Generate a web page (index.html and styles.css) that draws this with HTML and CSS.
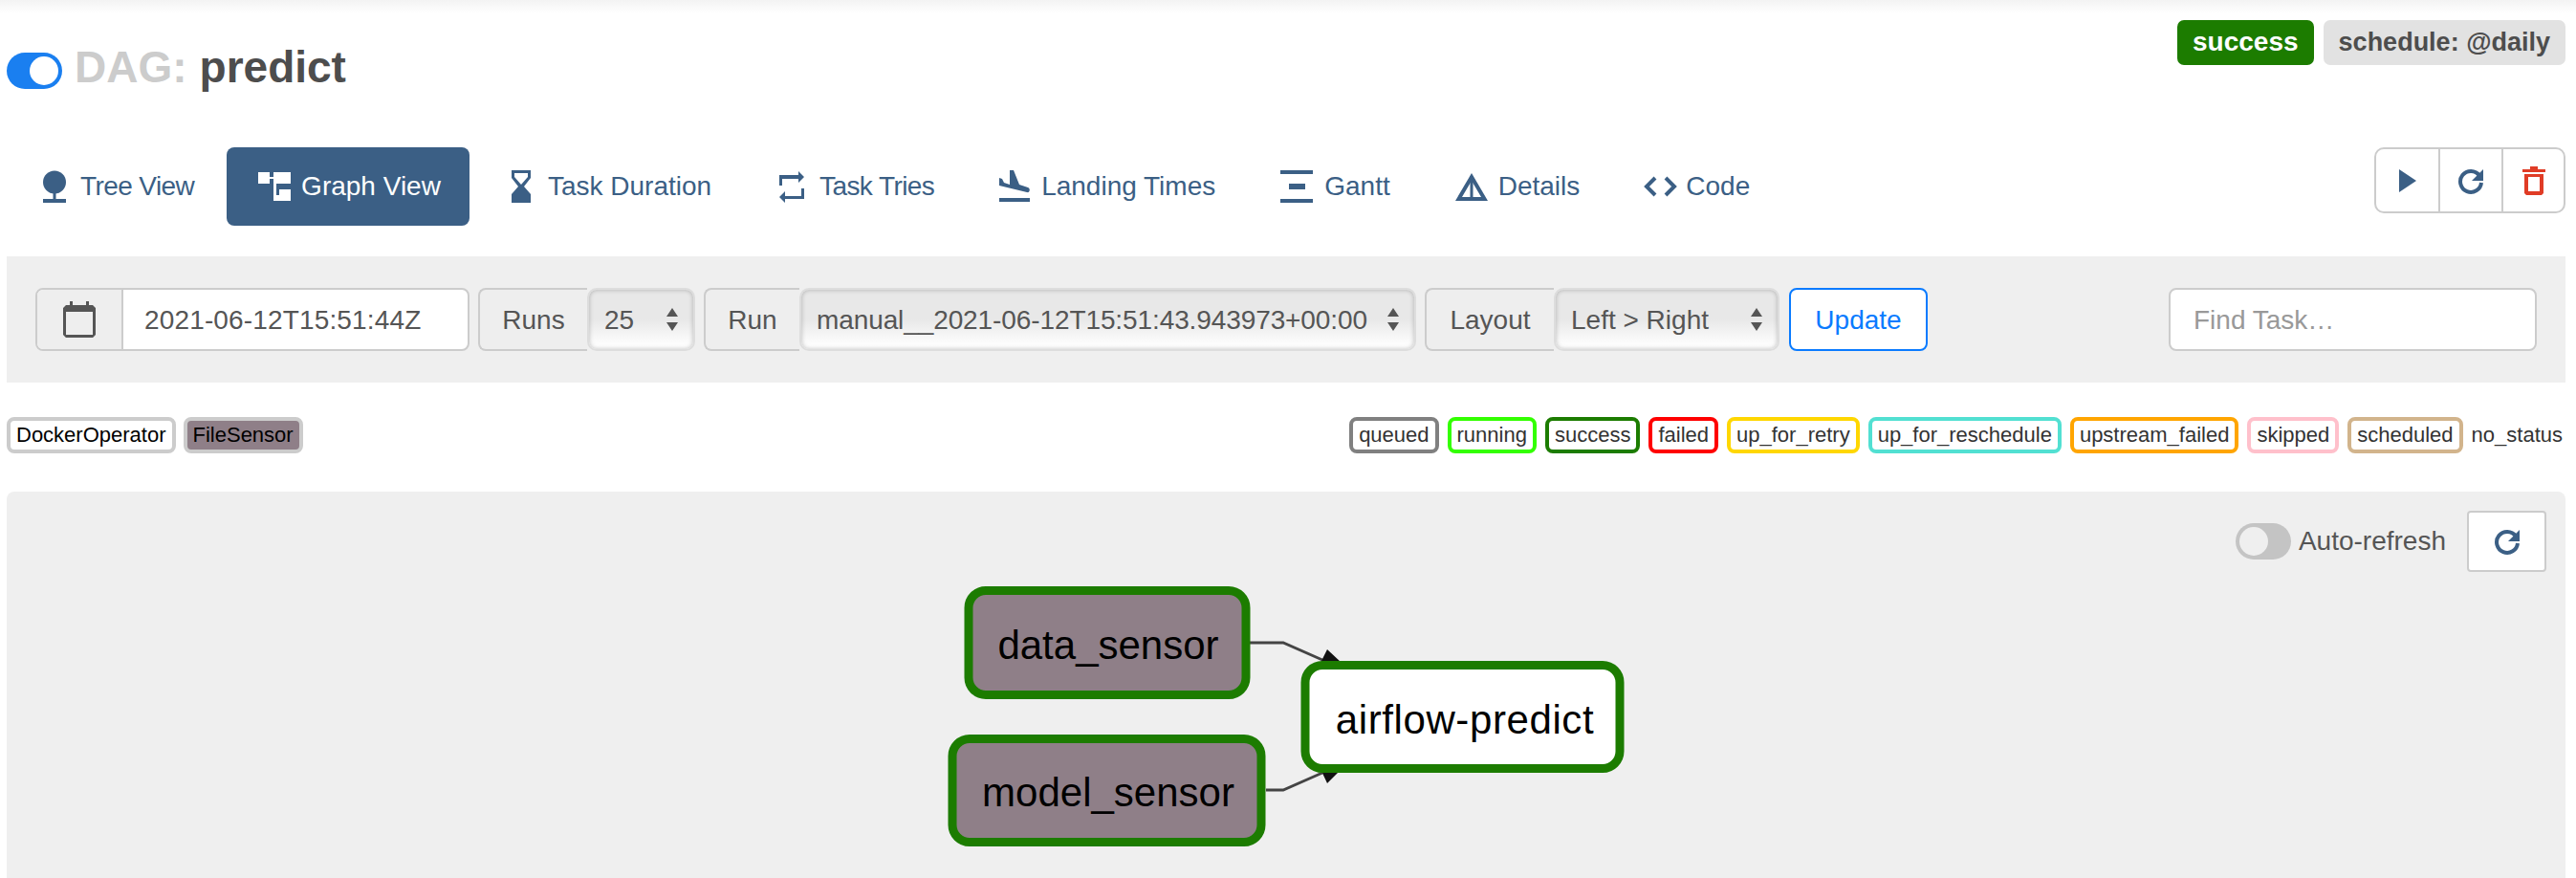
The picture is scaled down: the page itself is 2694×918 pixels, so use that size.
FILE: index.html
```html
<!DOCTYPE html>
<html lang="en">
<head>
  <meta charset="UTF-8" />
  <meta name="viewport" content="width=device-width, initial-scale=1.0" />
  <title>DAG: predict</title>
  <link rel="stylesheet" href="styles.css">
</head>
<body>
  <div class="top-shadow"></div>

  <div class="dag-head">
    <h2 class="dag-title">
      <span class="switch switch-on"><span class="knob"></span></span>
      <span class="dag-word">DAG:</span> <span>predict</span>
    </h2>
    <div class="badges">
      <span class="badge badge-success">success</span>
      <span class="badge badge-schedule">schedule: @daily</span>
    </div>
  </div>

  <div class="nav-row">
    <ul class="nav-pills">
      <li><a class="pill pill-tight">
        <svg width="39" height="34" viewBox="0 0 39 34"><circle cx="12" cy="12.500" r="12"/><rect x="10.500" y="22" width="3" height="9"/><rect y="30" width="24" height="4"/></svg>
        Tree View</a></li>
      <li><a class="pill active">
        <svg width="48" height="34" viewBox="0 0 48 34"><path d="M3 2h12v5h4V2h18v12H22v12h3v-6h12v12H19V9h-4v5H3z"/></svg>
        Graph View</a></li>
      <li><a class="pill">
        <svg width="48" height="34" viewBox="0 0 48 34"><path d="M10 0h20v8l-7 9 7 8v9H10v-9l7-8-7-9zM13 3v4l7 8 7-8V3z" fill-rule="evenodd"/></svg>
        Task Duration</a></li>
      <li><a class="pill pill-tight">
        <svg width="49" height="34" viewBox="0 0 49 34"><path d="M10 5h20V1l6 6-6 6V9H13v7h-3zM33 19h3v11H16v4l-6-6 6-6v5h17z" transform="translate(-3 0)"/></svg>
        Task Tries</a></li>
      <li><a class="pill">
        <svg width="48" height="34" viewBox="0 0 48 34"><path d="M15 0h4l6 15 9 3c3 1 2 6-1 5L4 16V8l3 1 2 4 6 2z"/><rect x="4" y="29" width="32" height="4"/></svg>
        Landing Times</a></li>
      <li><a class="pill">
        <svg width="50" height="34" viewBox="0 0 50 34"><rect x="4" width="34" height="4"/><rect x="13" y="14" width="17" height="6"/><rect x="4" y="30" width="34" height="4"/></svg>
        Gantt</a></li>
      <li><a class="pill">
        <svg width="49" height="34" viewBox="0 0 49 34"><path d="M21 7 7.500 30h27z" class="line"/><path d="M21 6v24" class="line thin"/></svg>
        Details</a></li>
      <li><a class="pill">
        <svg width="47" height="34" viewBox="0 0 47 34"><path d="M15 8 6 17l9 9M26 8l9 9-9 9" class="line"/></svg>
        Code</a></li>
    </ul>
    <div class="actions">
      <a class="action-btn">
        <svg width="18" height="24" viewBox="0 0 18 24"><path d="M0 0l18 12L0 24z" class="blue"/></svg>
      </a>
      <a class="action-btn">
        <svg width="28" height="28" viewBox="0 0 28 28"><path d="M23 8.500A11 11 0 1 0 25 16" class="refresh"/><path d="M27 2v12H15z" class="blue"/></svg>
      </a>
      <a class="action-btn">
        <svg width="24" height="30" viewBox="0 0 24 30"><path d="M0 3h8V0h8v3h8v3H0zM2 8h20v20l-2 2H4l-2-2zM6 11v15h12V11z" class="red" fill-rule="evenodd"/></svg>
      </a>
    </div>
  </div>

  <div class="form-bar">
    <div class="input-group date-group">
      <span class="addon">
        <svg width="34" height="38" viewBox="0 0 34 38"><path d="M7 0h3v4H24V0h3v4h4l3 3v28l-3 3H3l-3-3V7l3-3h4zM3 11v24h28V11z" fill-rule="evenodd"/></svg>
      </span>
      <span class="date-value">2021-06-12T15:51:44Z</span>
    </div>

    <div class="field">
      <span class="field-label runs-label">Runs</span>
      <div class="select runs-select">25<svg class="arrows" width="12" height="24" viewBox="0 0 12 24"><path d="M6 0l6 9H0zM6 24l-6-9h12z"/></svg></div>
    </div>
    <div class="field">
      <span class="field-label run-label">Run</span>
      <div class="select run-select">manual__2021-06-12T15:51:43.943973+00:00<svg class="arrows" width="12" height="24" viewBox="0 0 12 24"><path d="M6 0l6 9H0zM6 24l-6-9h12z"/></svg></div>
    </div>
    <div class="field">
      <span class="field-label layout-label">Layout</span>
      <div class="select layout-select">Left &gt; Right<svg class="arrows" width="12" height="24" viewBox="0 0 12 24"><path d="M6 0l6 9H0zM6 24l-6-9h12z"/></svg></div>
    </div>
    <button class="update-btn">Update</button>

    <div class="find-task">Find Task…</div>
  </div>

  <div class="legend-row">
    <div class="legend">
      <span class="op">DockerOperator</span>
      <span class="op op-sensor">FileSensor</span>
    </div>
    <div class="legend states">
      <span class="state" style="border-color: #808080">queued</span>
      <span class="state" style="border-color: #33ff00">running</span>
      <span class="state" style="border-color: #1c7c00">success</span>
      <span class="state" style="border-color: #ff0000">failed</span>
      <span class="state" style="border-color: #ffd700">up_for_retry</span>
      <span class="state" style="border-color: #52e0d2">up_for_reschedule</span>
      <span class="state" style="border-color: #ffa500">upstream_failed</span>
      <span class="state" style="border-color: #ffc0cb">skipped</span>
      <span class="state" style="border-color: #d2b48c">scheduled</span>
      <span class="state no-status">no_status</span>
    </div>
  </div>

  <div class="graph-panel">
    <div class="refresh-bar">
      <span class="switch switch-off"><span class="knob"></span></span>
      <span class="refresh-label">Auto-refresh</span>
      <a class="refresh-btn">
        <svg width="28" height="28" viewBox="0 0 28 28"><path d="M23 8.500A11 11 0 1 0 25 16" class="refresh"/><path d="M27 2v12H15z" class="blue"/></svg>
      </a>
    </div>

    <!-- coordinates are relative to the panel -->
    <svg class="graph" width="2676" height="404" viewBox="0 0 2676 404">
      <path d="M1300 158h35l41 18" class="edge"/>
      <path d="M1381 165l15 14h-22z" class="arrow"/>
      <path d="M1317 312h18l41-18" class="edge"/>
      <path d="M1381 305l15-15h-22z" class="arrow"/>

      <rect x="1006" y="103.500" width="290" height="109" rx="18" class="node sensor"/>
      <text x="1152" y="175" class="node-text">data_sensor</text>

      <rect x="989" y="258.500" width="323" height="108" rx="18" class="node sensor"/>
      <text x="1152" y="329" class="node-text">model_sensor</text>

      <rect x="1358" y="181.500" width="329" height="108" rx="18" class="node"/>
      <text x="1525" y="253" class="node-text node-text-wide">airflow-predict</text>
    </svg>
  </div>
</body>
</html>
```

FILE: styles.css
```css
html, body {
  margin: 0;
  height: 918px;
  overflow: hidden;
}
body {
  font-family: "Liberation Sans", Arial, sans-serif;
  font-size: 28px;
  color: #555;
  background-color: #fff;
}
.top-shadow {
  height: 14px;
  background: linear-gradient(#f3f3f3, #fff);
}

/* title row */
.dag-head {
  height: 140px;
  padding: 7px 11px 0 7px;
  box-sizing: border-box;
  display: flex;
  justify-content: space-between;
  align-items: flex-start;
}
.dag-title {
  margin: 25px 0 0;
  display: flex;
  align-items: flex-start;
  gap: 13px;
  font-size: 46px;
  line-height: 48px;
  font-weight: bold;
  color: #4d4d4d;
}
.dag-word {
  color: #ccc;
}
.switch {
  display: inline-flex;
  align-items: center;
  width: 58px;
  height: 38px;
  padding: 0 4px;
  box-sizing: border-box;
  border-radius: 19px;
}
.dag-title .switch {
  margin-top: 9px;
}
.switch-on {
  background-color: #1a7ff0;
  justify-content: flex-end;
}
.switch-off {
  background-color: #c4c4c4;
}
.knob {
  width: 30px;
  height: 30px;
  border-radius: 50%;
  background-color: #fff;
}
.switch-off .knob {
  background-color: #efefef;
}
.badges {
  display: flex;
  gap: 10px;
}
.badge {
  height: 47px;
  line-height: 46px;
  padding: 0 16px;
  border-radius: 7px;
  font-weight: bold;
}
.badge-success {
  background-color: #1c7c00;
  color: #fff;
}
.badge-schedule {
  background-color: #e2e2e2;
  color: #4d4d4d;
  font-size: 27px;
}

/* nav */
.nav-row {
  height: 82px;
  padding: 0 11px 0 15px;
  display: flex;
  justify-content: space-between;
  align-items: flex-start;
}
.nav-pills {
  list-style: none;
  margin: 0;
  padding: 0;
  display: flex;
  gap: 4px;
}
.pill {
  display: flex;
  align-items: center;
  height: 82px;
  padding: 0 30px;
  border-radius: 8px;
  color: #3b5f85;
  fill: #3b5f85;
}
.pill-tight {
  letter-spacing: -0.600px;
}
.pill.active {
  background-color: #3b5f85;
  color: #fff;
  fill: #fff;
}
.pill .line {
  fill: none;
  stroke: #3b5f85;
  stroke-width: 4;
}
.pill .thin {
  stroke-width: 3;
}
.actions {
  display: flex;
  height: 69px;
  border: 2px solid #ccc;
  border-radius: 10px;
  box-sizing: border-box;
}
.action-btn {
  width: 64px;
  display: flex;
  align-items: center;
  justify-content: center;
  border-left: 2px solid #ccc;
}
.action-btn:first-child {
  border-left: none;
  width: 65px;
}
.action-btn:last-child {
  width: 63px;
}
.blue {
  fill: #3b5f85;
}
.red {
  fill: #e03c26;
}
.refresh {
  fill: none;
  stroke: #3b5f85;
  stroke-width: 4;
}

/* form */
.form-bar {
  margin: 32px 11px 0 7px;
  height: 132px;
  padding: 0 30px;
  box-sizing: border-box;
  display: flex;
  align-items: center;
  gap: 9px;
  background-color: #efefef;
}
.input-group {
  display: flex;
  align-items: center;
  height: 66px;
  box-sizing: border-box;
  border: 2px solid #ccc;
  border-radius: 8px;
  overflow: hidden;
  background-color: #fff;
}
.date-group {
  width: 454px;
}
.addon {
  width: 88px;
  height: 100%;
  display: flex;
  align-items: center;
  justify-content: center;
  background-color: #eee;
  border-right: 2px solid #ccc;
  fill: #555;
}
.date-value {
  margin-left: 22px;
  padding-top: 2px;
  letter-spacing: 0.150px;
}
.field {
  display: flex;
  height: 66px;
}
.field-label {
  display: flex;
  align-items: center;
  justify-content: center;
  box-sizing: border-box;
  padding-top: 2px;
  border: 2px solid #ccc;
  border-right: none;
  border-radius: 8px 0 0 8px;
  background-color: #eee;
}
.runs-label { width: 114px; }
.run-label { width: 100px; }
.layout-label { width: 135px; }
.select {
  position: relative;
  display: flex;
  align-items: center;
  box-sizing: border-box;
  padding: 2px 0 0 16px;
  border: 2px solid #ddd;
  border-radius: 10px;
  background: linear-gradient(#e8e8e8 50%, #fff 95%);
  box-shadow: inset 0 0 5px rgba(0, 0, 0, 0.25);
}
.arrows {
  position: absolute;
  right: 16px;
  top: 19px;
  fill: #555;
}
.runs-select { width: 113px; }
.run-select {
  width: 645px;
  letter-spacing: -0.100px;
}
.layout-select { width: 236px; }
.update-btn {
  width: 145px;
  height: 66px;
  margin-left: 1px;
  padding: 2px 0 0;
  font: inherit;
  color: #0a7bff;
  background-color: #fff;
  border: 2px solid #0a7bff;
  border-radius: 8px;
}
.find-task {
  width: 385px;
  height: 66px;
  margin-left: auto;
  padding-left: 24px;
  line-height: 64px;
  box-sizing: border-box;
  color: #999;
  background-color: #fff;
  border: 2px solid #ccc;
  border-radius: 8px;
}

/* legends */
.legend-row {
  margin: 36px 14px 0 7px;
  display: flex;
  justify-content: space-between;
  font-size: 22px;
}
.legend {
  display: flex;
  gap: 8px;
}
.op {
  height: 38px;
  line-height: 30px;
  padding: 0 6px;
  box-sizing: border-box;
  border: 4px solid #ccc;
  border-radius: 8px;
  color: #000;
}
.op-sensor {
  background-color: #8f7f88;
}
.states {
  gap: 9px;
}
.state {
  height: 38px;
  line-height: 30px;
  padding: 0 6px;
  box-sizing: border-box;
  border: 4px solid #000;
  border-radius: 8px;
  color: #333;
}
.state.no-status {
  border-color: transparent;
  border-width: 4px 0;
  padding: 0;
}

/* graph */
.graph-panel {
  position: relative;
  margin: 40px 11px 0 7px;
  height: 404px;
  border-radius: 8px 8px 0 0;
  background-color: #efefef;
}
.refresh-bar {
  position: relative;
  z-index: 1;
  padding: 20px 20px 0 0;
  display: flex;
  justify-content: flex-end;
  align-items: center;
}
.refresh-label {
  margin: 0 22px 0 8px;
}
.refresh-btn {
  width: 83px;
  height: 64px;
  display: flex;
  align-items: center;
  justify-content: center;
  box-sizing: border-box;
  background-color: #fff;
  border: 2px solid #ccc;
  border-radius: 4px;
}
.graph {
  position: absolute;
  left: 0;
  top: 0;
}
.edge {
  fill: none;
  stroke: #444;
  stroke-width: 3;
}
.arrow {
  fill: #111;
}
.node {
  fill: #fff;
  stroke: #1c7c00;
  stroke-width: 9;
}
.sensor {
  fill: #8f7f88;
}
.node-text {
  font-size: 42px;
  text-anchor: middle;
  fill: #000;
}
.node-text-wide {
  letter-spacing: 0.600px;
}
```
